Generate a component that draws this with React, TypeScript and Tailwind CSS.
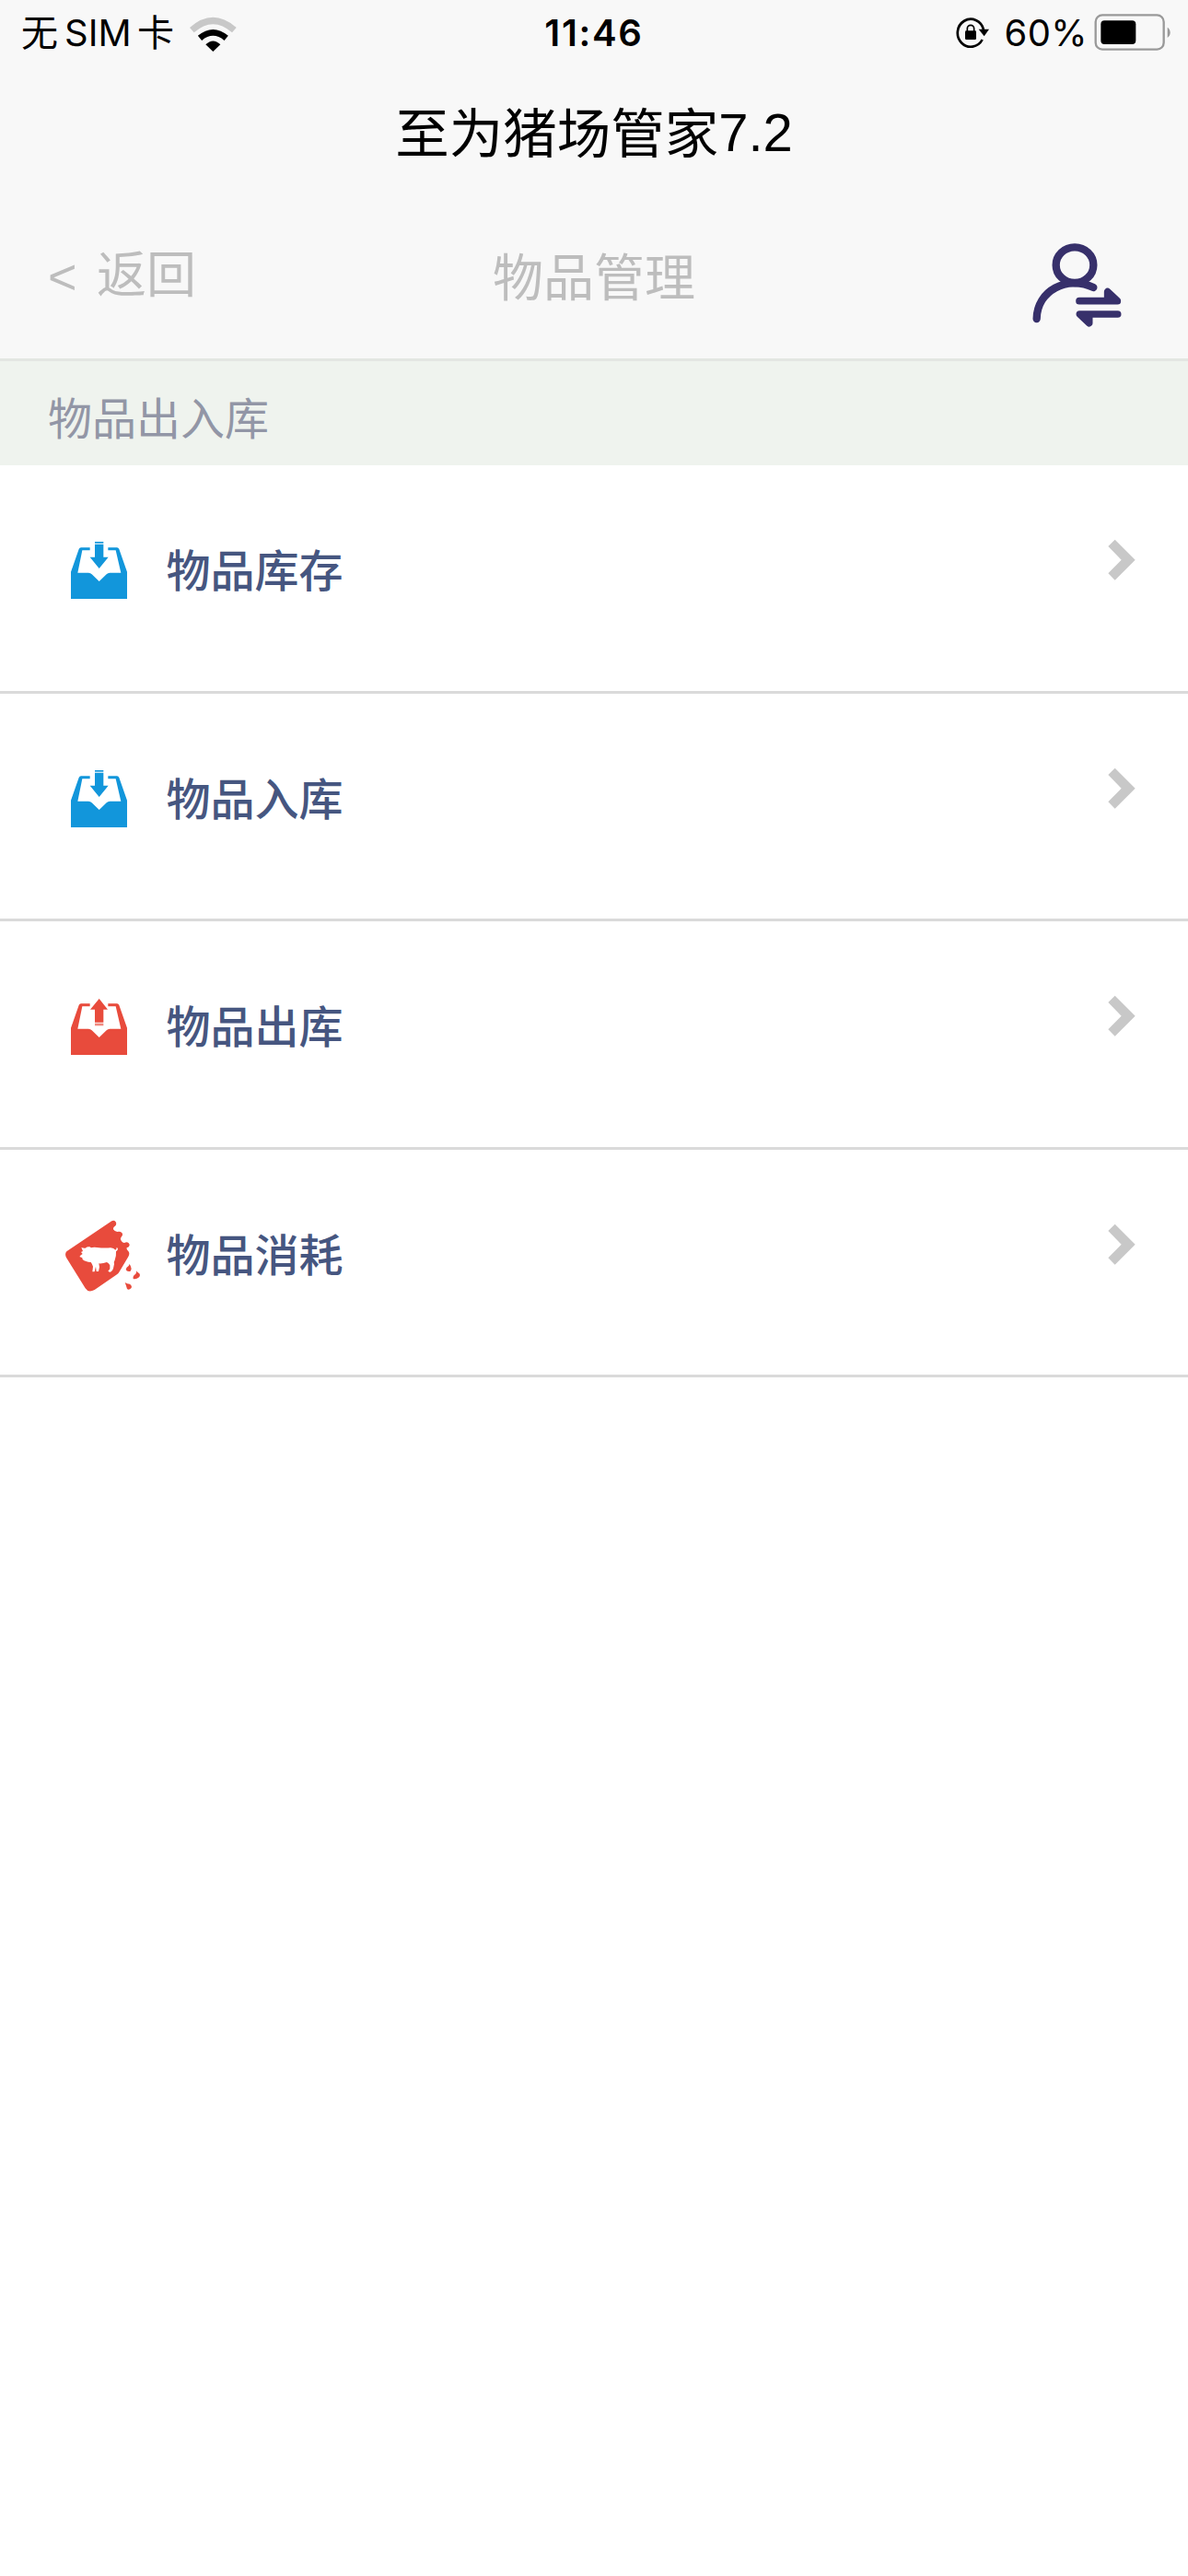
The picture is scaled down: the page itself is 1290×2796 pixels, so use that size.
import React from "react";

const cjk = "font-['Noto_Sans_CJK_SC',sans-serif]";

function WifiIcon() {
  return (
    <svg className="h-[40px] w-[54px]" viewBox="612 40 162 120" fill="none">
      <path d="M625 90Q694 29 763 90" stroke="#c8c8c8" strokeWidth="21" />
      <path d="M651 116Q694 80 737 116" stroke="#000" strokeWidth="20" />
      <path d="M670 137Q694 114 718 137L694 160Z" fill="#000" />
    </svg>
  );
}

function RotationLockIcon() {
  return (
    <svg className="h-[36px] w-[38px]" viewBox="114 52 114 108" fill="none">
      <path d="M207 97A43 45 0 1 0 203 130" stroke="#000" strokeWidth="8" />
      <path d="M191 96H225L209 119Z" fill="#000" />
      <rect x="147" y="101" width="36" height="29" rx="4" fill="#000" />
      <path d="M154 103V94A11 11 0 0 1 176 94V103" stroke="#000" strokeWidth="5" />
    </svg>
  );
}

function BatteryIcon() {
  return (
    <svg className="h-[40px] w-[84px]" viewBox="564 40 252 120">
      <rect x="569" y="44" width="222" height="112" rx="22" fill="none" stroke="#999" strokeWidth="7" />
      <rect x="586" y="62" width="114" height="77" rx="12" fill="#000" />
      <path d="M803 84Q812 90 812 101T803 118Z" fill="#999" />
    </svg>
  );
}

function SwitchUserIcon() {
  return (
    <svg
      className="mt-[40px] h-[100px] w-[105px]"
      viewBox="81 60 315 300"
      fill="none"
      stroke="#37306b"
      strokeWidth="25"
      strokeLinecap="round"
      strokeLinejoin="round"
    >
      <ellipse cx="231" cy="143" rx="61" ry="58" />
      <path d="M107 318C108 226 206 176 292 216" />
      <path d="M246 260H370L338 230V260M371 303H247L278 332V303" strokeWidth="23" />
    </svg>
  );
}

function InboxIcon({ direction }: { direction: "in" | "out" }) {
  const color = direction === "in" ? "#1296db" : "#e84b3c";
  return (
    <svg className="h-[80px] w-[100px]" viewBox="60 60 300 240" fill={color}>
      <path d="M111 182L137 108Q139 103 144 103H173V112H148L133 185H168Q175 186 179 190L203 213L227 190Q231 186 238 185H274L257 112H232V103H261Q266 103 268 108L294 182V270H111Z" />
      {direction === "in" ? (
        <>
          <path d="M189 92H217V134H233L203 171L173 134H189Z" />
          <path d="M189 84H217V89H189Z" />
        </>
      ) : (
        <>
          <path d="M203 87L231 122H217V164H189V122H174Z" />
          <path d="M189 167H217V175H189Z" opacity=".65" />
        </>
      )}
    </svg>
  );
}

function FeedBagIcon() {
  return (
    <svg className="h-[80px] w-[100px]" viewBox="60 67 300 240" fill="#e84b3c">
      <path d="M97 173L244 74Q253 69 258 78Q260 87 255 90Q248 94 249 101Q254 109 262 109Q270 106 277 112Q282 120 275 126Q270 132 276 140Q282 148 291 143Q302 144 302 153Q300 160 293 161Q291 166 298 172Q304 180 298 190L269 239Q266 245 261 248L188 298Q168 309 158 293L96 193Q90 181 97 173Z" />
      <path
        d="M145 160Q152 163 158 162Q164 157 172 158L177 161Q185 158 195 160Q220 163 240 161Q251 162 256 168Q260 167 260 160L264 163Q264 170 258 173Q259 190 254 201Q250 207 252 214L249 228Q245 239 237 240L232 237L238 230V218Q234 211 228 208Q214 213 202 212L204 224L201 238H194L192 222L188 239H181L183 222Q180 213 176 208Q158 207 149 199L148 194L139 190Q143 184 149 181L144 175L150 172Z"
        fill="#fff"
      />
      <path d="M302 214Q312 229 304 238Q292 240 290 231Q291 225 299 220Z" />
      <path d="M325 236Q326 241 334 245Q339 253 330 259Q321 264 314 262Q312 253 320 248Q325 244 325 236Z" />
      <path d="M287 274Q294 279 303 279Q312 286 307 293Q300 300 294 295Q291 284 287 274Z" />
    </svg>
  );
}

function Chevron() {
  return (
    <svg className="mr-[57px] ml-auto mt-[80px] h-[46px] w-[30px]" viewBox="159 75 90 138" fill="#c8c8c8">
      <path d="M182 77L248 143L182 209L160 187L203 143L160 99Z" />
    </svg>
  );
}

const items: { label: string; icon: React.ReactNode }[] = [
  { label: "物品库存", icon: <InboxIcon direction="in" /> },
  { label: "物品入库", icon: <InboxIcon direction="in" /> },
  { label: "物品出库", icon: <InboxIcon direction="out" /> },
  { label: "物品消耗", icon: <FeedBagIcon /> },
];

export default function App() {
  return (
    <div className={`min-h-[2796px] w-[1290px] bg-white ${cjk}`}>
      <header className="h-[392px] border-b-[3px] border-[#e3e6e2] bg-[#f8f8f8]">
        <div className="grid h-[66px] grid-cols-3 font-['Inter','Noto_Sans_CJK_SC',sans-serif] text-[40px] leading-[66px] text-black">
          <div className="flex items-center pl-[23px] pt-[2px]">
            <span className="w-[47px]">无</span>
            <span className="w-[79px]">SIM</span>
            <span>卡</span>
            <span className="ml-[15px]"><WifiIcon /></span>
          </div>
          <div className="pt-[3px] text-center font-semibold tracking-[1.7px]">11:46</div>
          <div className="flex items-center justify-end pr-[18px]">
            <RotationLockIcon />
            <span className="ml-[15px] mr-[7px] pt-[3px] tracking-[0.4px]">60%</span>
            <BatteryIcon />
          </div>
        </div>
        <h1 className="flex h-[154px] items-center justify-center text-black">
          <span className="-mt-[5px] text-[58.5px] leading-[60px]">至为猪场管家</span>
          <span className="mt-[2px] font-['Liberation_Sans',sans-serif] text-[58px] leading-[60px]">7.2</span>
        </h1>
        <nav className="grid h-[169px] grid-cols-3 text-[54px] leading-[60px] text-[#bdbdbd]">
          <div className="flex pl-[52px]">
            <span className="mt-[50px] w-[53px] font-['Liberation_Sans',sans-serif]">&lt;</span>
            <span className="mt-[45px]">返回</span>
          </div>
          <div className="mt-[47px] text-center text-[55px]">物品管理</div>
          <div className="flex justify-end pr-[68px]">
            <SwitchUserIcon />
          </div>
        </nav>
      </header>
      <h2 className="h-[113px] bg-[#eff3ee] pl-[52px] text-[48px] font-normal leading-[118px] text-[#9296a6]">
        物品出入库
      </h2>
      <ul>
        {items.map((item) => (
          <li key={item.label} className="flex h-[247.5px] items-start border-b-[3px] border-[#dadada]">
            <span className="ml-[60px] mt-[75px] w-[120.5px]">{item.icon}</span>
            <span className="mt-[81px] text-[48px] font-medium leading-[60px] text-[#465680]">{item.label}</span>
            <Chevron />
          </li>
        ))}
      </ul>
    </div>
  );
}
